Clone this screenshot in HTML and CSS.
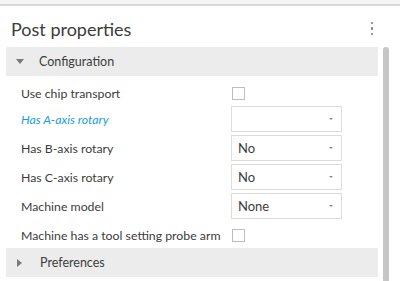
FILE: index.html
```html
<!DOCTYPE html>
<html>
<head>
<meta charset="utf-8">
<link rel="stylesheet" href="styles.css">
</head>
<body>
<div class="topstrip"></div>
<div class="panel">
  <div class="titlebar">
    <h1 class="title">Post properties</h1>
    <div class="kebab"><span></span><span></span><span></span></div>
  </div>
  <div class="content">
    <div class="main">
      <div class="group open">
        <span class="tri down"></span>
        <span class="group-label">Configuration</span>
      </div>
      <div class="rows">
        <div class="row first">
          <span class="label">Use chip transport</span>
          <span class="checkbox"></span>
        </div>
        <div class="row">
          <span class="label modified">Has A-axis rotary</span>
          <div class="select"><span class="value"></span><span class="arrow"></span></div>
        </div>
        <div class="row">
          <span class="label">Has B-axis rotary</span>
          <div class="select"><span class="value">No</span><span class="arrow"></span></div>
        </div>
        <div class="row">
          <span class="label">Has C-axis rotary</span>
          <div class="select"><span class="value">No</span><span class="arrow"></span></div>
        </div>
        <div class="row">
          <span class="label">Machine model</span>
          <div class="select"><span class="value">None</span><span class="arrow"></span></div>
        </div>
        <div class="row last">
          <span class="label">Machine has a tool setting probe arm</span>
          <span class="checkbox"></span>
        </div>
      </div>
      <div class="group">
        <span class="tri right"></span>
        <span class="group-label">Preferences</span>
      </div>
    </div>
    <div class="scrollbar"></div>
  </div>
</div>
</body>
</html>
```
FILE: styles.css
```css
* { box-sizing: border-box; }
html, body { margin: 0; padding: 0; background: #fff; }
body {
  font-family: Lato, "Noto Sans", sans-serif;
  color: #3c3c3c;
  width: 400px;
  height: 281px;
  overflow: hidden;
}
.topstrip {
  height: 6px;
  background: #f5f5f5;
  border-bottom: 2px solid #d8d8d8;
}
.panel { padding-left: 6px; }
.titlebar {
  display: flex;
  align-items: center;
  justify-content: space-between;
  height: 41px;
  padding-right: 27px;
}
.title {
  margin: 0;
  padding-left: 5px;
  font-size: 18px;
  font-weight: normal;
  color: #3c3c3c;
  padding-top: 4px;
}
.kebab {
  display: flex;
  flex-direction: column;
  gap: 3px;
  padding-top: 4px;
}
.kebab span {
  width: 2.5px;
  height: 2.5px;
  background: #7a7a7a;
  border-radius: 50%;
}
.content { display: flex; }
.main { width: 372px; }
.scrollbar {
  width: 6px;
  margin-left: 5px;
  height: 240px;
  background: #c6c6c6;
  border-radius: 3px 3px 0 0;
}
.group {
  height: 29px;
  background: #ececec;
  display: flex;
  align-items: center;
}
.tri {
  width: 0; height: 0;
  margin-left: 10px;
  margin-right: 15px;
}
.tri.down {
  border-left: 4.5px solid transparent;
  border-right: 4.5px solid transparent;
  border-top: 5px solid #7a7a7a;
}
.tri.right {
  border-top: 4.5px solid transparent;
  border-bottom: 4.5px solid transparent;
  border-left: 5px solid #7a7a7a;
  margin-left: 11px;
  margin-right: 18px;
}
.group-label { font-size: 12.5px; color: #3c3c3c; }
.rows { padding-top: 4px; }
.row {
  display: flex;
  align-items: center;
  height: 26px;
  margin-bottom: 3px;
  padding-left: 15px;
}
.row.first { margin-bottom: 0; }
.row.last { margin-bottom: 0; }
.label {
  width: 210px;
  font-size: 12.3px;
  color: #3c3c3c;
  white-space: nowrap;
}
.label.modified { color: #1c9ce0; font-style: italic; }
.checkbox {
  width: 13px;
  height: 13px;
  border: 1px solid #bdbdbd;
  background: #fff;
  margin-left: 1px;
}
.select {
  width: 111px;
  height: 26px;
  border: 1px solid #dcdcdc;
  display: flex;
  align-items: center;
  justify-content: space-between;
  padding: 0 8px 0 6px;
}
.value { font-size: 13px; color: #3c3c3c; }
.arrow {
  width: 0; height: 0;
  border-left: 2px solid transparent;
  border-right: 2px solid transparent;
  border-top: 2.5px solid #8a8a8a;
}
```
